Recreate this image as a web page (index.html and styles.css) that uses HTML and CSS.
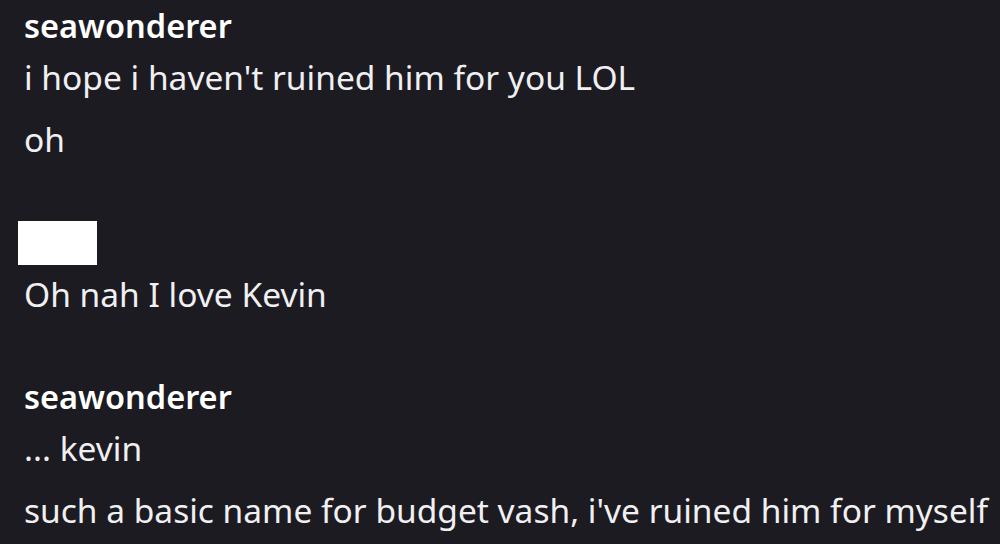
FILE: index.html
```html
<!DOCTYPE html>
<html lang="en">
<head>
    <meta charset="UTF-8">
    <title>Chat</title>
    <link rel="stylesheet" href="styles.css">
</head>
<body>

    <div class="chat">
        <div class="group">
            <div class="name">seawonderer</div>
            <div class="msg">i hope i haven't ruined him for you LOL</div>
            <div class="msg">oh</div>
        </div>

        <div class="group">
            <div class="name"><span class="redacted"></span></div>
            <div class="msg">Oh nah I love Kevin</div>
        </div>

        <div class="group last">
            <div class="name">seawonderer</div>
            <div class="msg">... kevin</div>
            <div class="msg">such a basic name for budget vash, i've ruined him for myself</div>
        </div>
    </div>

</body>
</html>
```

FILE: styles.css
```css
body {
    margin: 0;
    padding: 0;
    background-color: #1c1b21;
    font-family: "Noto Sans", sans-serif;
    color: #f0f0f2;
    overflow: hidden;
}
.chat {
    padding-left: 24px;
}
.group {
    margin-top: 47px;
}
.group:first-child {
    margin-top: 0;
}
.group.last {
    margin-top: 46px;
}
.name {
    height: 46px;
    padding-top: 4px;
    box-sizing: border-box;
    font-size: 32.5px;
    line-height: 43px;
    font-weight: 600;
    color: #ffffff;
}
.redacted {
    display: block;
    width: 79px;
    height: 44px;
    margin: 0 0 0 -6px;
    background: #ffffff;
}
.msg {
    font-size: 33.5px;
    line-height: 62px;
    white-space: nowrap;
}
.group:first-child .msg:first-of-type {
    padding-top: 1px;
}
```
